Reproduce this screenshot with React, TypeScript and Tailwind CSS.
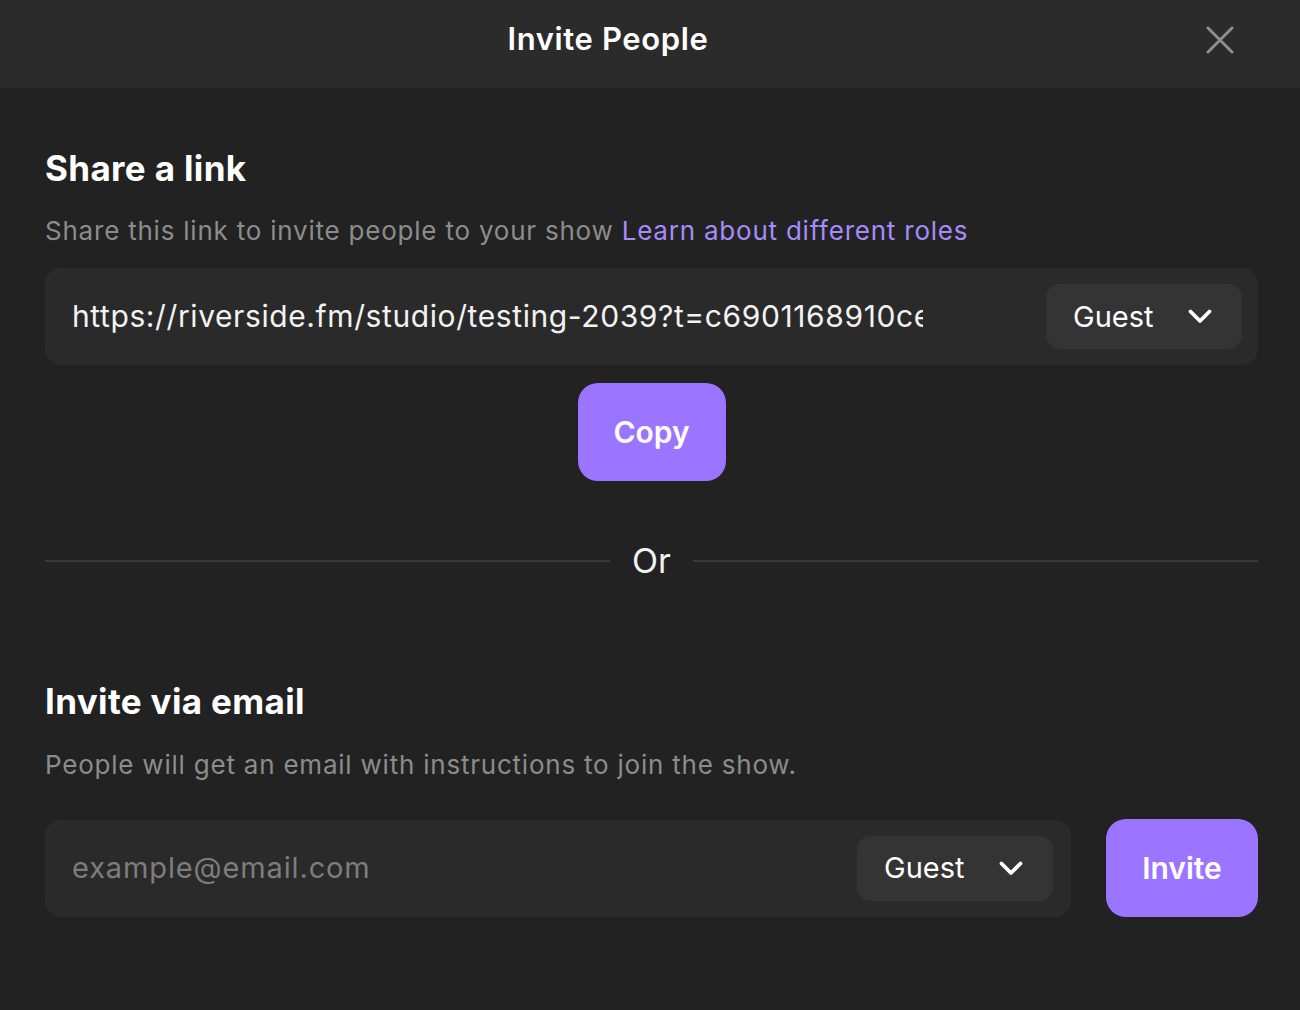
function Chevron() {
  return (
    <svg width="24" height="15" viewBox="0 0 24 15" fill="none" className="shrink-0">
      <path d="M2.5 2.5L12 12L21.5 2.5" stroke="#ffffff" strokeWidth="3.8" strokeLinecap="round" strokeLinejoin="round" />
    </svg>
  );
}

function CloseIcon() {
  return (
    <svg width="28" height="28" viewBox="0 0 28 28" fill="none">
      <path d="M2 2L26 26M26 2L2 26" stroke="currentColor" strokeWidth="3" strokeLinecap="round" />
    </svg>
  );
}

function RoleSelect() {
  return (
    <button className="flex h-[65px] w-[196px] shrink-0 items-center justify-between rounded-[14px] bg-[#343434] pl-[27px] pr-[30px] text-[29px] text-white">
      <span>Guest</span>
      <Chevron />
    </button>
  );
}

export default function App() {
  return (
    <div className="min-h-[1010px] w-[1300px] bg-[#222222] text-white" style={{ fontFamily: 'Inter, "Noto Sans", sans-serif' }}>
      {/* Header */}
      <div className="flex h-[88px] items-center bg-[#2b2b2b] pb-[9px]">
        <h2 className="flex-1 pl-[10px] text-center text-[31px] font-semibold tracking-[0.02em]">Invite People</h2>
        <button className="mr-[66px] flex h-[28px] w-[28px] items-center justify-center text-[#8e8e8e]">
          <CloseIcon />
        </button>
      </div>

      <div className="pl-[45px] pr-[42px] pt-[60px]">
        {/* Share a link */}
        <h3 className="text-[35px] font-bold leading-[40px] tracking-[0.01em]">Share a link</h3>
        <p className="mt-[27px] text-[26px] leading-[32px] tracking-[0.03em] text-[#8c8c8c]">
          Share this link to invite people to your show{' '}
          <a className="text-[#a48cfa]">Learn about different roles</a>
        </p>

        <div className="mt-[21px] flex h-[97px] items-center gap-4 rounded-[16px] bg-[#2a2a2a] pl-[27px] pr-[16px]">
          <div className="flex-1 overflow-hidden whitespace-nowrap text-[30px] tracking-[0.02em] text-[#f2f2f2]">
            <div className="w-[851px] overflow-hidden">https://riverside.fm/studio/testing-2039?t=c6901168910ce</div>
          </div>
          <RoleSelect />
        </div>

        <div className="mt-[18px] flex justify-center">
          <button className="h-[98px] w-[148px] rounded-[20px] bg-[#9b75ff] text-[30px] font-semibold text-white">
            Copy
          </button>
        </div>

        {/* Divider */}
        <div className="mt-[60px] flex items-center gap-[22px]">
          <div className="h-[2px] flex-1 bg-[#3a3a3a]" />
          <span className="text-[34px] leading-[40px] text-[#f2f2f2]">Or</span>
          <div className="h-[2px] flex-1 bg-[#3a3a3a]" />
        </div>

        {/* Invite via email */}
        <h3 className="mt-[100px] text-[35px] font-bold leading-[40px] tracking-[0.01em]">Invite via email</h3>
        <p className="mt-[28px] text-[26px] leading-[32px] tracking-[0.03em] text-[#8c8c8c]">
          People will get an email with instructions to join the show.
        </p>

        <div className="mt-[38px] flex items-center gap-[35px]">
          <div className="flex h-[97px] flex-1 items-center rounded-[16px] bg-[#2a2a2a] pl-[27px] pr-[18px]">
            <input
              className="min-w-0 flex-1 bg-transparent text-[29px] tracking-[0.03em] text-white outline-none placeholder:text-[#7d7d7d]"
              placeholder="example@email.com"
            />
            <RoleSelect />
          </div>
          <button className="h-[98px] w-[152px] rounded-[20px] bg-[#9b75ff] text-[30px] font-semibold text-white">
            Invite
          </button>
        </div>
      </div>
    </div>
  );
}
